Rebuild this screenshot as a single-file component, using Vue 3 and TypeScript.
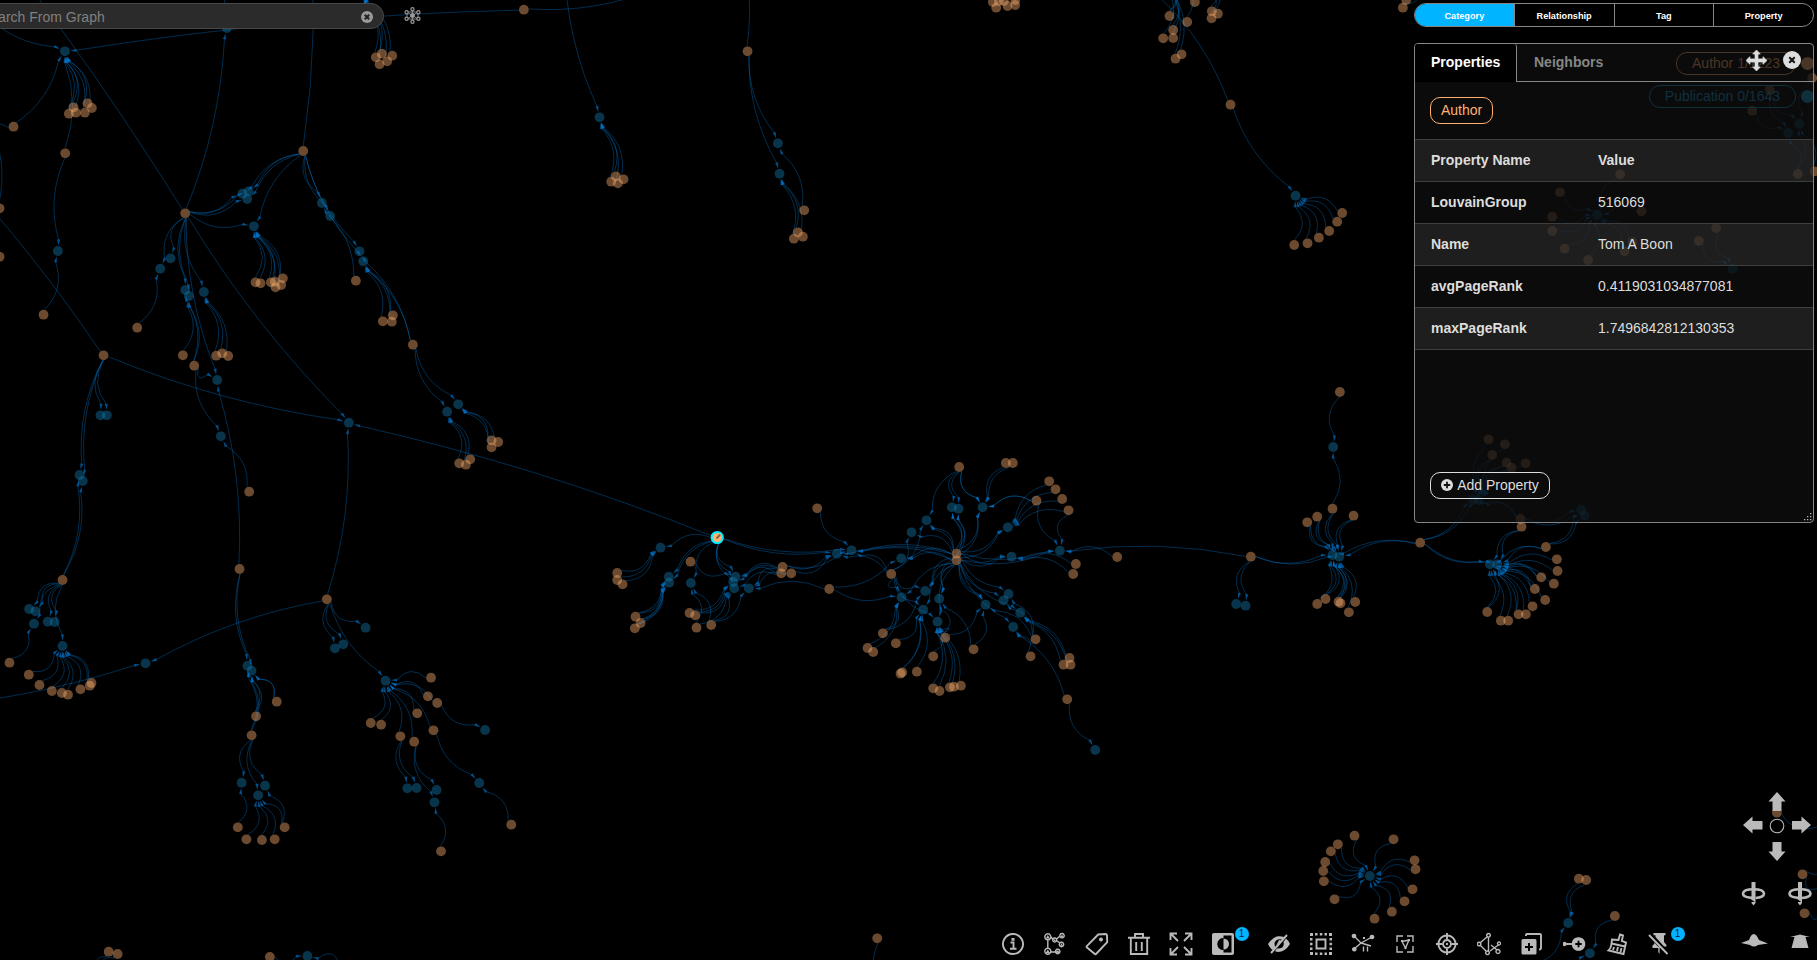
<script setup lang="ts">
interface Point { x: number; y: number }
interface Node extends Point { kind: 'author' | 'publication' }
interface Edge { path: string; arrow: string }
interface Region { x: number; y: number; scaleX: number; links: string[] }

const SCALE = 3

// Each link reads "publication < author author ...", in the region's own units.
const regions: Region[] = [
  { x: 0, y: 0, scaleX: 3, links: [
    '194,154<40,380 206,341 220,322 227,338 254,338 262,310 275,324 195,460 -60,35 1571,29',
    '680,84<555,640 705,-200', '-230,-445<555,640', '745,574<909,453 555,640', '727,581<909,453 555,640',
    '741,597<909,453 555,640', '761,679<909,453 555,640 766,847 781,850 812,847 824,845 826,862 843,855 848,835',
    '511,775<555,640', '480,806<555,640 411,983', '555,870<555,640 582,1097', '566,888<555,640 548,1066 582,1097',
    '611,876<555,640 648,1067 666,1060 684,1068', '173,753<195,460 130,944', '965,609<909,453 1067,842',
    '990,648<909,453', '1078,754<909,453 1238,1034', '1089,784<909,453 1148,964 1178,946 1175,965 1238,1034',
    '925,-300<909,453', '1088,-25<1127,172 1145,161 1138,193 1161,184 1176,167', '-100,410<40,380',
    '-300,330<310,1066', '-40,330<-2,625', '-40,1000<-2,770',
  ] },
  { x: 0, y: 320, scaleX: 3, links: [
    '1046,308<310,106 555,-320 980,838 2151,653', '301,286<310,106', '320,286<310,106',
    '238,465<310,106 187,780', '248,483<310,106 187,780', '651,180<582,137 555,-320 718,747',
    '662,349<582,137 747,515', '1341,275<1238,74 1377,430 1397,434 1410,418',
    '1374,253<1238,74 1474,361 1494,366 1474,382',
  ] },
  { x: 0, y: 560, scaleX: 2.9037, links: [
    '181,258<181,60 83,344 114,375 150,393 179,399 197,404 233,388 260,377 265,369',
    '98,191<181,60 27,308', '84,147<181,60', '102,154<181,60', '138,185<181,60', '158,186<181,60',
    '422,310<949,118 -300,450', '972,265<949,118', '996,253<949,118', '1061,203<949,118',
    '718,317<695,27 743,469 730,526', '730,332<695,27 743,469 730,526 803,425 803,425',
    '1119,362<949,118 1251,353 1242,409 1269,429 1211,460 1258,511 1202,545 1162,529 1106,494 1076,489',
    '1408,510<1269,429', '1391,669<1258,511 1484,794', '1182,685<1162,529', '1209,684<1162,529',
    '1267,690<1202,545', '1261,727<1202,545 1280,874', '701,668<730,526 690,802',
    '749,706<730,526 715,838 760,840 797,838 826,802', '769,677<730,526 826,802',
    '280,1260<315,1175 341,1182', '892,1188<783,1191 1000,1215',
  ] },
  { x: 600, y: 430, scaleX: 3, links: [
    '181,353<351,323 51,429 51,450 67,463', '206,440<351,323 106,560 121,579 104,595',
    '207,458<351,323 106,560 121,579 104,595', '272,459<351,323 289,593 333,585',
    '406,440<351,323 271,395 547,411 543,430', '399,456<351,323 547,411 268,549 285,556',
    '402,475<351,323 285,556 333,585 289,593 543,430', '446,475<333,585 687,477 573,430 547,411',
    '710,371<351,323 547,411 573,430 873,432 1069,371', '754,361<351,323 651,235 547,411 1069,371 1069,391 873,432',
    '903,385<687,477 1069,371 1069,391', '904,502<687,477 1069,391 848,610 802,654 819,666 873,432',
    '934,307<1069,371 873,432', '979,271<1077,111 1069,371 1069,391 873,432', '1055,232<1077,111 1069,371 1069,391',
    '1075,236<1077,111 1069,371 1069,391', '1147,232<1077,111 1077,111 1217,99 1238,99 1309,212 1309,212 1069,371 1069,391',
    '1223,292<1069,371 1069,391 1347,154 1366,178 1386,207 1405,241', '1234,380<1069,371 1069,391 1427,402 1419,432',
    '1379,362<1309,212 1405,241 1069,371 1069,391 1952,380 1551,381', '975,483<1069,371 1069,391 873,432 848,610',
    '1017,506<1069,371 1069,391 1035,623 1120,658', '969,539<1069,391 873,432 887,640 906,727 901,731 950,725',
    '1012,575<1069,391 873,432 1035,623 999,679 999,775 1018,783 1049,772 1061,770 1082,767',
    '1156,524<1069,371 1069,391 1035,623 1120,658 1306,628', '1210,511<1069,391 1306,628', '1225,492<1069,371 1306,628',
    '1260,548<1069,391 1390,704 1408,684 1411,704', '1239,591<1069,391 1291,679 1401,808', '1485,960<1401,808',
  ] },
  { x: 500, y: 0, scaleX: 3, links: [
    '298,352<190,-120 333,545 347,529 353,550 370,538', '500,-40<71,29', '833,430<742,154 912,631',
    '838,521<742,154 881,716 893,697 908,710', '700,-250<742,154', '1155,3020<1131,2815',
  ] },
  { x: 960, y: 0, scaleX: 3, links: [
    '130,-90<98,6 116,3 108,23 131,3 142,18 165,15 165,0', '628,-60<628,48 609,115 639,90 639,114 646,176 664,163',
    '622,-70<628,48', '670,-80<681,66 704,6', '735,-60<755,34 754,55 773,41',
    '1006,587<811,314 1002,735 1042,730 1076,713 1107,693 1131,665 1146,639', '575,-40<811,314',
  ] },
  { x: 1100, y: 370, scaleX: 3, links: [
    '699,231<719,66 697,416', '697,555<621,457 651,440 697,416 760,437 960,518 452,560 651,702 676,687 715,695 721,700',
    '717,560<621,457 651,440 697,416 760,437 960,518 452,560 676,687 715,695 721,700 746,727 765,696',
    '408,702<452,560', '436,707<452,560', '1169,583<960,518 1264,470 1337,531 1304,657 1323,622 1202,752 1161,726 1255,733',
    '1191,583<960,518 1264,470 1337,531 1370,568 1372,603 1361,641 1323,622 1304,657 1335,690 1297,709 1277,733 1255,733 1224,752 1161,726',
    '1118,388<960,518 1165,208 1176,255 1219,278 1234,293 1261,447', '1135,390<960,518 1214,223 1176,255 1219,278 1234,293 1276,280 1261,447',
    '1443,419<1261,447 1337,531', '1453,437<1261,447 1337,531',
  ] },
  { x: 1400, y: 0, scaleX: 3, links: [
    '60,-60<8,23 18,0', '591,644<660,523 479,577 456,650 456,693 493,746 564,780 673,754 697,726 724,634',
    '997,806<896,723 948,684', '1197,371<1109,270 1236,234 1193,522 1243,514', '1164,399<1056,332 1193,522 1109,270',
  ] },
  { x: 1300, y: 810, scaleX: 3, links: [
    '209,198<163,77 280,88 113,103 92,124 75,156 69,183 71,214 103,268 223,326 275,305 313,274 337,238 346,178 343,151',
    '804,339<836,206 858,210 700,470', '869,430<944,318 780,470',
  ] },
  { x: 1380, y: 770, scaleX: 3, links: ['1345,180<1190,128', '1350,262<1267,313', '1340,375<1267,313', '1350,420<1273,430'] },
]

const nodes: Node[] = []
const edges: Edge[] = []
const CURVE = 15

function addNode(p: Point, kind: Node['kind']) {
  if (!nodes.some(n => n.kind === kind && Math.hypot(n.x - p.x, n.y - p.y) < 1.3)) nodes.push({ ...p, kind })
}

function connect(a: Point, b: Point): Edge {
  const d = Math.hypot(b.x - a.x, b.y - a.y)
  const ux = (b.x - a.x) / d
  const uy = (b.y - a.y) / d
  const at = (o: Point, along: number, side = 0) => `${(o.x + ux * along - uy * side).toFixed(1)} ${(o.y + uy * along + ux * side).toFixed(1)}`
  return {
    path: `M${at(a, 5)}Q${at(a, d / 2 - 3, CURVE)} ${at(b, -Math.min(11, d / 2))}`,
    arrow: `M${at(b, -5.5)}L${at(b, -11.5, 1.5)}L${at(b, -11.5, -1.5)}Z`,
  }
}

for (const region of regions) {
  const point = (s: string): Point => {
    const [x, y] = s.split(',').map(Number)
    return { x: region.x + x / region.scaleX + 0.2, y: region.y + y / SCALE }
  }
  for (const link of region.links) {
    const [target, sources] = link.split('<')
    const publication = point(target)
    addNode(publication, 'publication')
    for (const source of sources.split(' ')) {
      const author = point(source)
      addNode(author, 'author')
      edges.push(connect(author, publication))
    }
  }
}

const modes = ['Category', 'Relationship', 'Tag', 'Property']
const properties = [
  ['LouvainGroup', '516069'],
  ['Name', 'Tom A Boon'],
  ['avgPageRank', '0.4119031034877081'],
  ['maxPageRank', '1.7496842812130353'],
]

// s: stroked outline, f: filled shape, k: black cut-out
interface Tool { name: string; s?: string; f?: string; k?: string; badge?: boolean; width?: number }
const tools: Tool[] = [
  { name: 'Info', s: 'M12 2a10 10 0 1 0 .01 0M9.5 10.5H12.5V16.5M9 16.8H15.5', f: 'M10.5 6h3v2.8h-3z' },
  { name: 'Layout', s: 'M4.8 7V17M8 5L10.5 8M13 7.5L17 4M13.5 8.5L17 11M8 20H12M16 20H12M4.8 1.8a3 3 0 1 0 .01 0M4.8 16.2a3 3 0 1 0 .01 0M11.7 6a2 2 0 1 0 .01 0M19 1.5a2.2 2.2 0 1 0 .01 0M18.5 10.3a2.2 2.2 0 1 0 .01 0M14.7 17.3a2.2 2.2 0 1 0 .01 0', f: 'M4.8 3l2 3.6h-4zM4.8 17.5l2 3.6h-4zM19 2.5l1.4 2.4h-2.8zM18.5 11.3l1.4 2.4h-2.8zM11.7 7l1.2 2h-2.4zM14.7 18.3l1.2 2h-2.4z' },
  { name: 'Tags', s: 'M1.8 14.2L13.2 2.5L20.5 2Q21.8 2 22 3.5L22.2 10.2L11 22Q10.5 22.6 9.8 22L2 15.5Q1.2 14.8 1.8 14.2Z', f: 'M16 5.5a2 2 0 1 0 .01 0' },
  { name: 'Delete', s: 'M1 5.8H23M8 5V2H16V5M3.8 6V22H20.2V6M9.2 10V19M14.8 10V19' },
  { name: 'Fit', s: 'M2 2L9 9M22 2L15 9M2 22L9 15M22 22L15 15M1.5 8V1.5H8M16 1.5H22.5V8M1.5 16V22.5H8M16 22.5H22.5V16' },
  { name: 'Contrast', f: 'M3 1H21Q23 1 23 3V21Q23 23 21 23H3Q1 23 1 21V3Q1 1 3 1Z', k: 'M12.5 3.5H20.5V20.5H12.5V18A6 6 0 0 1 12 6H12.5Z', badge: true, width: 56 },
  { name: 'Hide', f: 'M1 12Q7 3.5 13 4.2L17.5 5L15.5 7.5Q9 6 7.5 11Q7.5 14 8.5 15L5.5 18Q2.5 15.5 1 12ZM19 6.5Q21.5 8.5 23 12Q18 20 11 20L8 19.2L10 16.5Q16.5 17 16.8 12L16.5 10ZM9 14L14 8.5L12 8Z', s: 'M4 21L20 3' },
  { name: 'Select', s: 'M7.5 7.5H16.5V16.5H7.5Z', f: 'M1 1h3v3H1zM6 1h2.5v2.5H6zM10.8 1h2.5v2.5h-2.5zM15.5 1H18v2.5h-2.5zM20 1h3v3h-3zM1 20h3v3H1zM6 20.5h2.5V23H6zM10.8 20.5h2.5V23h-2.5zM15.5 20.5H18V23h-2.5zM20 20h3v3h-3zM1 6h2.5v2.5H1zM1 10.8h2.5v2.5H1zM1 15.5h2.5V18H1zM20.5 6H23v2.5h-2.5zM20.5 10.8H23v2.5h-2.5zM20.5 15.5H23V18h-2.5z' },
  { name: 'Connections', s: 'M3 4L10 11L21 5M10 11L3 17M10 11L20 14M12.5 14.5V19.5M16.5 14.5V19.5', f: 'M3 1.7a2.3 2.3 0 1 0 .01 0M21 2.7a2.3 2.3 0 1 0 .01 0M3.3 15a2.3 2.3 0 1 0 .01 0M12 5h2v2h-2z' },
  { name: 'Frame', s: 'M4 10V4H10M14 4H20V10M20 14V20H14M10 20H4V14M9 9.5L16 8L12.5 16Z', f: 'M8 8h2v2H8zM15 7h2v2h-2zM11.5 15h2v2h-2z' },
  { name: 'Target', s: 'M12 3.5a8.5 8.5 0 1 0 .01 0M12 8a4 4 0 1 0 .01 0M12 1V7M12 17V23M1 12H7M17 12H23', f: 'M12 10.8a1.2 1.2 0 1 0 .01 0' },
  { name: 'Cut', s: 'M10.5 4.5L3.5 10.5M3.5 13.5L9.5 19.5M11.5 5V19M11.5 1.5a1.8 1.8 0 1 0 .01 0M2 10.2a1.8 1.8 0 1 0 .01 0M10.5 19a1.8 1.8 0 1 0 .01 0M13 19L22 12.5M14 13L20 18M22 10a1.5 1.5 0 1 0 .01 0M21 17.5a2 2 0 1 0 .01 0', width: 43 },
  { name: 'Duplicate', f: 'M2.5 7H15Q16.5 7 16.5 8.5V21Q16.5 22.5 15 22.5H3Q1.5 22.5 1.5 21V8.5Q1.5 7 3 7Z', k: 'M8 11h2v3h3v2h-3v3H8v-3H5v-2h3z', s: 'M6 4V3Q6 2 7 2H20Q21 2 21 3V16Q21 17.5 19 17.5', width: 43 },
  { name: 'Expand', s: 'M2 12H12', f: 'M1.5 9.8a2.2 2.2 0 1 0 .01 0M15.5 5.2a6.8 6.8 0 1 0 .01 0', k: 'M14.6 8.8h1.8v2.3h2.3v1.8h-2.3v2.3h-1.8v-2.3h-2.3v-1.8h2.3z' },
  { name: 'Clean', s: 'M13.5 8L15 2.5L18 3.5L16.8 9L21 10.5L18.5 22L3.5 18.5Q6 16 6.3 13L7 7.5ZM6.5 11.5L20 14.5M8 18L9 15M12 19L13 15M15.5 20L16.5 16' },
  { name: 'Unpin', s: 'M2 3L20.5 22', f: 'M6.5 1H18.5V3.2H17V10L19.5 13V14.5H17L8.5 5V3.2H6.5ZM7.2 10.5L11 14.5L12.7 15L12.5 22L11.3 20V16H5.5V13.5L7.2 12Z', badge: true },
]
</script>

<template>
  <main class="workspace">
    <svg class="graph" width="1817" height="960" viewBox="0 0 1817 960">
      <path v-for="(e, i) in edges" :key="'e' + i" :d="e.path" class="edge" />
      <circle v-for="(n, i) in nodes" :key="'n' + i" :cx="n.x" :cy="n.y" r="4.9" :class="n.kind" />
      <path v-for="(e, i) in edges" :key="'a' + i" :d="e.arrow" class="arrow" />
      <g class="selected">
        <circle cx="717.2" cy="537.5" r="5.6" />
        <path d="M716.5 538.5L720 534.8" />
      </g>
    </svg>

    <header class="search">
      <span>Search From Graph</span>
      <svg width="12" height="12" viewBox="0 0 12 12"><circle cx="6" cy="6" r="6" fill="#999" /><path d="M3.8 3.8L8.2 8.2M8.2 3.8L3.8 8.2" stroke="#222" stroke-width="2" /></svg>
    </header>
    <svg class="flower" width="17" height="17" viewBox="0 0 17 17" fill="none" stroke="#9a9a9a">
      <path d="M8.5 2V15M3 5L14 12M14 5L3 12M3 5H14M3 12H14M3 5V12M14 5V12" stroke-width=".8" />
      <g fill="#000" stroke-width="1.2"><circle cx="8.5" cy="2.2" r="1.6" /><circle cx="8.5" cy="14.8" r="1.6" /><circle cx="2.6" cy="5.2" r="1.6" /><circle cx="14.4" cy="5.2" r="1.6" /><circle cx="2.6" cy="11.8" r="1.6" /><circle cx="14.4" cy="11.8" r="1.6" /></g>
      <circle cx="8.5" cy="8.5" r="2" fill="#9a9a9a" />
    </svg>

    <nav class="modes">
      <button v-for="(mode, i) in modes" :key="mode" :class="{ active: i === 0 }">{{ mode }}</button>
    </nav>

    <div class="legend">
      <div class="legend-row tan"><span>Author 1/1223</span><i /></div>
      <div class="legend-row teal"><span>Publication 0/1643</span><i /></div>
    </div>

    <section class="panel">
      <div class="tabs">
        <div class="tab current">Properties</div>
        <div class="tab rest">Neighbors</div>
        <div class="actions">
          <svg width="21" height="21" viewBox="0 0 21 21" fill="#ddd"><path d="M10.5 0L14.3 4H12V9H17V6.7L21 10.5L17 14.3V12H12V17H14.3L10.5 21L6.7 17H9V12H4V14.3L0 10.5L4 6.7V9H9V4H6.7Z" stroke="#ddd" stroke-width=".7" /></svg>
          <svg width="18" height="18" viewBox="0 0 18 18"><circle cx="9" cy="9" r="9" fill="#ddd" /><path d="M6.3 6.3L11.7 11.7M11.7 6.3L6.3 11.7" stroke="#111" stroke-width="2" /></svg>
        </div>
      </div>
      <div class="label-area"><span class="pill">Author</span></div>
      <div class="table">
        <div class="row head"><b>Property Name</b><b>Value</b></div>
        <div v-for="[name, value] in properties" :key="name" class="row"><b>{{ name }}</b><span>{{ value }}</span></div>
      </div>
      <button class="add">
        <svg width="12" height="12" viewBox="0 0 12 12"><circle cx="6" cy="6" r="6" fill="#ddd" /><path d="M6 2.8V9.2M2.8 6H9.2" stroke="#111" stroke-width="1.8" /></svg>
        Add Property
      </button>
      <svg class="grip" width="8" height="8" viewBox="0 0 8 8" fill="#bbb"><path d="M6 0h1.3v1.3H6zM3 3h1.3v1.3H3zM6 3h1.3v1.3H6zM0 6h1.3v1.3H0zM3 6h1.3v1.3H3zM6 6h1.3v1.3H6z" /></svg>
    </section>

    <svg class="camera" width="76" height="170" viewBox="0 0 76 170" fill="#bababa">
      <path d="M36 1L44.5 10.5H40.5V20H31.5V10.5H27.5ZM36 70L27.5 60.5H31.5V51H40.5V60.5H44.5ZM2 34L11.5 25.5V30H21.5V38.5H11.5V42.5ZM70 34L60.5 25.5V30H51V38.5H60.5V42.5Z" />
      <circle cx="36" cy="35" r="6.8" fill="none" stroke="#bababa" stroke-width="1.1" />
      <g v-for="x in [12.5, 59]" :key="x" :transform="`translate(${x} 102.5)`">
        <path d="M-2 -11.5H2V3.5H-2ZM-2 8.5H2V9.5L0 12L-2 9.5ZM-5 4L2 1V9Z" />
        <path d="M-3 4.2Q-10.5 3.5-10.5 0Q-10-4.2 0-4.2Q10-4.2 10.5 0Q10.5 3.8 2 4.5" fill="none" stroke="#bababa" stroke-width="2.6" />
      </g>
      <path d="M0 152L8 149Q10 143 12.8 143Q15.5 143 18 149L27 152.5L17 154Q13 157 9 154ZM49 146L59 143.5L69 146H64.5L67.5 157H50.5L53.5 146Z" />
    </svg>

    <footer class="toolbar">
      <div v-for="tool in tools" :key="tool.name" class="tool" :style="{ width: (tool.width ?? 42) + 'px' }">
        <svg width="24" height="24" viewBox="0 0 24 24" :aria-label="tool.name">
          <path v-if="tool.f" :d="tool.f" fill="#bababa" />
          <path v-if="tool.k" :d="tool.k" fill="#000" />
          <path v-if="tool.s" :d="tool.s" fill="none" stroke="#bababa" :class="{ fine: ['Layout', 'Cut', 'Frame', 'Connections'].includes(tool.name) }" />
          <path v-if="tool.name === 'Contrast'" d="M12.5 6.5a5.5 5.5 0 0 1 0 11Z" fill="#bababa" />
        </svg>
        <span v-if="tool.badge" class="badge">1</span>
      </div>
    </footer>
  </main>
</template>

<style>
html, body { background: #000; overflow: hidden; }
</style>

<style scoped>
.workspace { position: relative; width: 1817px; height: 960px; overflow: hidden; background: #000; color: #ddd; font: 14px "Liberation Sans", Arial, sans-serif; }
button { font: inherit; color: inherit; background: none; margin: 0; padding: 0; box-sizing: border-box; }
.graph, .flower, .camera, .search, .modes, .legend, .panel, .toolbar { position: absolute; }
.graph { inset: 0; }
.edge { fill: none; stroke: #0070c4; stroke-opacity: .4; stroke-width: 1; }
.arrow { fill: #0070c4; fill-opacity: .7; }
.author { fill: #ffb070; fill-opacity: .42; }
.publication { fill: #147fb5; fill-opacity: .42; }
.selected circle { fill: #ffb070; stroke: #00f0ff; stroke-width: 2; }
.selected path { stroke: #86643f; stroke-width: 2; }
.search { left: -30px; top: 3px; width: 414px; height: 26px; box-sizing: border-box; border: 1px solid #484848; border-radius: 13px; background: #2b2b2b; color: #808080; padding: 1px 10px 0; display: flex; align-items: center; justify-content: space-between; }
.flower { left: 403.5px; top: 6.5px; }
.modes { left: 1414px; top: 3px; width: 400px; height: 24px; box-sizing: border-box; display: flex; overflow: hidden; border: 1px solid #868686; border-radius: 12px; background: #000; }
.modes button { flex: 1; border: 0; border-left: 1px solid #868686; color: #fff; font-size: 9.2px; font-weight: bold; padding-top: 1px; }
.modes .active { background: #00b4ff; border-left: 0; }
.legend { right: 3px; top: 52px; display: flex; flex-direction: column; align-items: flex-end; gap: 10px; }
.legend-row { display: flex; align-items: center; gap: 5px; }
.legend-row span { box-sizing: border-box; height: 23px; line-height: 21px; padding: 0 15px; border: 1px solid; border-radius: 11px; }
.legend-row i { width: 13px; height: 13px; border-radius: 50%; background: currentColor; }
.tan { color: #ffb070; }
.teal { color: #1596d2; }
.panel { left: 1414px; top: 43px; width: 400px; height: 480px; box-sizing: border-box; border: 1px solid #868686; border-radius: 4px; background: rgba(14, 14, 14, .76); display: flex; flex-direction: column; align-items: flex-start; }
.tabs { width: 100%; height: 38px; display: flex; font-weight: bold; line-height: 37px; flex: none; }
.tab { padding-left: 16px; box-sizing: border-box; }
.current { width: 102px; background: #000; color: #fff; border-right: 1px solid #868686; border-radius: 3px 3px 0 0; }
.rest { flex: 1; color: #868686; border-bottom: 1px solid #868686; padding-left: 17px; }
.actions { width: 67px; display: flex; gap: 16px; align-items: center; border-bottom: 1px solid #868686; box-sizing: border-box; padding-bottom: 5px; }
.actions svg { flex: none; }
.label-area { height: 57px; padding: 15px 15px 0; box-sizing: border-box; flex: none; }
.pill { display: block; box-sizing: border-box; height: 27px; padding: 0 10px; line-height: 25px; border: 1px solid #ffb070; border-radius: 10px; color: #ffb070; }
.table { width: 100%; border-top: 1px solid #3e3e3e; }
.row { height: 42px; box-sizing: border-box; padding: 0 16px 2px; border-bottom: 1px solid #3e3e3e; display: grid; grid-template-columns: 167px 1fr; align-items: center; }
.row:nth-child(odd) { background: rgba(255, 255, 255, .078); }
.add { margin: 122px 0 0 15px; width: 120px; height: 27px; border: 1px solid #ddd; border-radius: 10px; display: flex; align-items: center; justify-content: center; gap: 4px; padding-bottom: 1px; }
.grip { align-self: flex-end; margin: 14px 1px 0 0; }
.camera { left: 1740.5px; top: 790.5px; }
.toolbar { left: 991.5px; top: 926px; height: 34px; display: flex; }
.tool { height: 34px; padding: 5.5px 0 0 9px; box-sizing: border-box; position: relative; flex: none; }
.tool svg { display: block; stroke-width: 1.9; }
.tool .fine { stroke-width: 1.4; }
.badge { position: absolute; left: 33px; top: 1px; width: 14px; height: 14px; border-radius: 50%; background: #00b4ff; color: #123; font-size: 10px; line-height: 14px; text-align: center; }
</style>
